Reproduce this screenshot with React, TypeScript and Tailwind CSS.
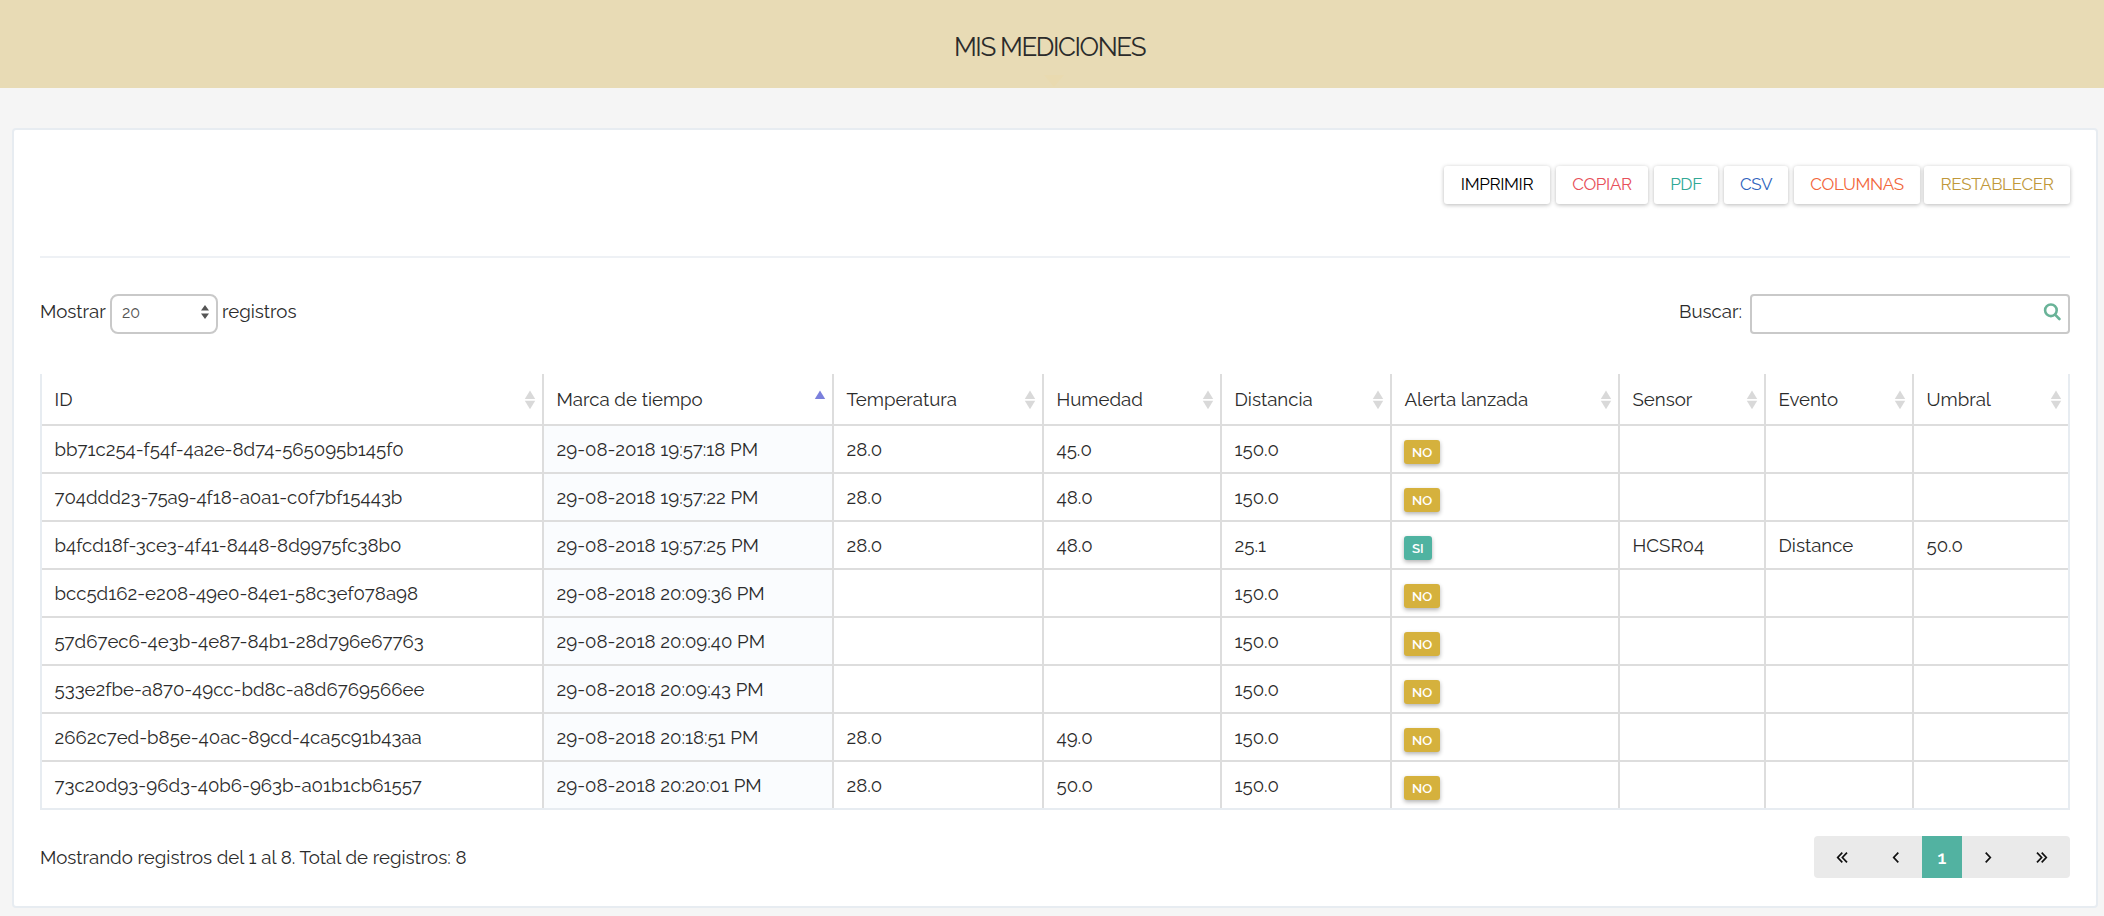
type Row = [string, string, string, string, string, 'NO' | 'SI', string, string, string]

const columns: { label: string; width: string }[] = [
  { label: 'ID', width: 'w-[502px]' },
  { label: 'Marca de tiempo', width: 'w-[290px]' },
  { label: 'Temperatura', width: 'w-[210px]' },
  { label: 'Humedad', width: 'w-[178px]' },
  { label: 'Distancia', width: 'w-[170px]' },
  { label: 'Alerta lanzada', width: 'w-[228px]' },
  { label: 'Sensor', width: 'w-[146px]' },
  { label: 'Evento', width: 'w-[148px]' },
  { label: 'Umbral', width: 'w-[154px]' },
]

const rows: Row[] = [
  ['bb71c254-f54f-4a2e-8d74-565095b145f0', '29-08-2018 19:57:18 PM', '28.0', '45.0', '150.0', 'NO', '', '', ''],
  ['704ddd23-75a9-4f18-a0a1-c0f7bf15443b', '29-08-2018 19:57:22 PM', '28.0', '48.0', '150.0', 'NO', '', '', ''],
  ['b4fcd18f-3ce3-4f41-8448-8d9975fc38b0', '29-08-2018 19:57:25 PM', '28.0', '48.0', '25.1', 'SI', 'HCSR04', 'Distance', '50.0'],
  ['bcc5d162-e208-49e0-84e1-58c3ef078a98', '29-08-2018 20:09:36 PM', '', '', '150.0', 'NO', '', '', ''],
  ['57d67ec6-4e3b-4e87-84b1-28d796e67763', '29-08-2018 20:09:40 PM', '', '', '150.0', 'NO', '', '', ''],
  ['533e2fbe-a870-49cc-bd8c-a8d6769566ee', '29-08-2018 20:09:43 PM', '', '', '150.0', 'NO', '', '', ''],
  ['2662c7ed-b85e-40ac-89cd-4ca5c91b43aa', '29-08-2018 20:18:51 PM', '28.0', '49.0', '150.0', 'NO', '', '', ''],
  ['73c20d93-96d3-40b6-963b-a01b1cb61557', '29-08-2018 20:20:01 PM', '28.0', '50.0', '150.0', 'NO', '', '', ''],
]

const actions = [
  { label: 'IMPRIMIR', style: 'w-[106px] text-black' },
  { label: 'COPIAR', style: 'ml-[6px] w-[92px] text-[#e7505a]' },
  { label: 'PDF', style: 'ml-[6px] w-16 text-[#32a896]' },
  { label: 'CSV', style: 'ml-[6px] w-16 text-[#2f63bd]' },
  { label: 'COLUMNAS', style: 'ml-[6px] w-[126px] text-[#f2663b]' },
  { label: 'RESTABLECER', style: 'ml-1 w-[146px] text-[#c0983a]' },
]

function SortIcon({ active }: { active: boolean }) {
  return (
    <svg width="12" height="20" viewBox="0 0 12 20" className="block">
      <path d="M6 .5 11.2 9H.8Z" fill={active ? '#7b80dc' : '#d9d9d9'} />
      {!active && <path d="M.8 10.8h10.4L6 19.3Z" fill="#d9d9d9" />}
    </svg>
  )
}

function Chevrons({ double, flip }: { double?: boolean; flip?: boolean }) {
  return (
    <svg width={double ? 12 : 8} height="12" viewBox={double ? '0 0 12 12' : '0 0 8 12'} className={flip ? '-scale-x-100' : ''} fill="none" stroke="#111" strokeWidth="1.7">
      <path d="M6.3 1.6 1.7 6.5l4.6 4.9" />
      {double && <path d="M11 1.6 6.4 6.5l4.6 4.9" />}
    </svg>
  )
}

export default function App() {
  return (
    <div className="h-[916px] w-[2104px] overflow-hidden bg-[#f5f5f5] font-['Raleway','Lato',sans-serif] text-[18.67px] text-[#2b2b2b]">
      <header className="relative flex h-[88px] justify-center bg-[#e8dbb5] pt-[27px] pr-[5px]">
        <h1 className="text-[26px] leading-10 tracking-[-1.4px]">MIS MEDICIONES</h1>
        <svg width="20" height="12" viewBox="0 0 20 12" className="absolute bottom-px left-[1044px]">
          <path d="M0 0h20L10 12Z" fill="#e9dab0" />
        </svg>
      </header>
      <main className="mt-10 ml-3 h-[780px] w-[2086px] rounded-sm border-2 border-[#e7ecf1] bg-white px-[26px] pt-9">
        <div className="flex h-[92px] items-start justify-end border-b-2 border-[#eef1f5]">
          {actions.map((a) => (
            <button key={a.label} className={`h-[38px] rounded-[3px] bg-white text-center text-[17px] tracking-[-0.35px] shadow-[0_1px_4px_rgba(0,0,0,0.28)] ${a.style}`}>
              {a.label}
            </button>
          ))}
        </div>
        <div className="mt-9 flex h-10 justify-between">
          <div className="flex">
            <span className="mr-1 w-[66px] pt-[3px] leading-7">Mostrar</span>
            <div className="flex h-10 w-[108px] items-center justify-between rounded-lg border-2 border-[#c9c9c9] pr-[7px] pb-[2px] pl-[10px] text-base text-[#555]">
              20
              <svg width="8" height="14" viewBox="0 0 8 14" fill="#555" className="-mt-[2px]">
                <path d="M4 0 8 5.6H0ZM0 8.4h8L4 14Z" />
              </svg>
            </div>
            <span className="ml-1 pt-[3px] leading-7">registros</span>
          </div>
          <div className="flex">
            <span className="mr-2 pt-[3px] leading-7">Buscar:</span>
            <div className="flex h-10 w-80 justify-end rounded border-2 border-[#c9c9c9] pt-[7px] pr-[7px]">
              <svg width="18" height="18" viewBox="0 0 18 18" fill="none" stroke="#69b398" strokeWidth="2.6" strokeLinecap="round">
                <circle cx="7.9" cy="7.3" r="5.8" />
                <path d="m12.3 11.8 4.1 4.2" />
              </svg>
            </div>
          </div>
        </div>
        <table className="mt-10 w-[2030px] table-fixed border-separate border-spacing-0 border-2 border-t-0 border-[#e7ecf1]">
          <thead>
            <tr className="h-[52px]">
              {columns.map((c, i) => (
                <th key={c.label} className={`${c.width} border-b-2 border-[#ddd] px-0 pt-[2px] pb-0 font-normal not-last:border-r-2`}>
                  <div className="flex items-center justify-between pr-[6px] pl-[12.5px]">
                    <span className="mb-[2px] leading-6">{c.label}</span>
                    <SortIcon active={i === 1} />
                  </div>
                </th>
              ))}
            </tr>
          </thead>
          <tbody>
            {rows.map((r) => (
              <tr key={r[0]} className="h-12 last:h-[46px] [&:last-child>td]:border-b-0">
                {r.map((v, i) => (
                  <td key={i} className="border-b-2 border-[#ddd] pt-[2px] pr-0 pb-0 pl-3 not-last:border-r-2 nth-2:bg-[#fafcfe]">
                    {i === 5 ? (
                      <span className={`mt-1 block h-6 w-fit rounded-[3px] px-2 text-[13.3px] leading-[25px] font-semibold text-white shadow-[0_2px_4px_rgba(0,0,0,0.3)] ${v === 'SI' ? 'bg-[#4fb3a1]' : 'bg-[#d5b13d]'}`}>{v}</span>
                    ) : (
                      <span className="mb-[2px] block pl-[0.5px] leading-6">{v}</span>
                    )}
                  </td>
                ))}
              </tr>
            ))}
          </tbody>
        </table>
        <div className="mt-[26px] flex h-[42px] justify-between">
          <span className="pt-[9px] leading-6">Mostrando registros del 1 al 8. Total de registros: 8</span>
          <nav className="flex w-64 overflow-hidden rounded bg-[#eaeaea]">
            <span className="flex w-[56px] items-center justify-center"><Chevrons double /></span>
            <span className="flex w-[52px] items-center justify-center"><Chevrons /></span>
            <span className="w-10 bg-[#52b2a1] text-center text-[18.7px] leading-[43px] font-semibold text-white">1</span>
            <span className="flex w-[52px] items-center justify-center"><Chevrons flip /></span>
            <span className="flex w-[56px] items-center justify-center"><Chevrons double flip /></span>
          </nav>
        </div>
      </main>
    </div>
  )
}
